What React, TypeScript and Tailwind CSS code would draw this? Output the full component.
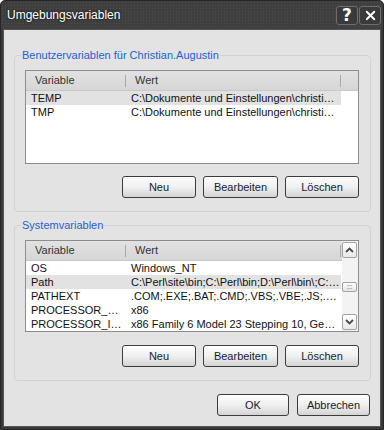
import { X } from "lucide-react";

type Row = [string, string];

const userVars: Row[] = [
  ["TEMP", "C:\\Dokumente und Einstellungen\\christian.augustin\\Lokale Einstellungen\\Temp"],
  ["TMP", "C:\\Dokumente und Einstellungen\\christian.augustin\\Lokale Einstellungen\\Temp"],
];

const systemVars: Row[] = [
  ["OS", "Windows_NT"],
  ["Path", "C:\\Perl\\site\\bin;C:\\Perl\\bin;D:\\Perl\\bin\\;C:\\WINDOWS\\system32"],
  ["PATHEXT", ".COM;.EXE;.BAT;.CMD;.VBS;.VBE;.JS;.JSE;.WSF;.WSH"],
  ["PROCESSOR_ARCHITECTURE", "x86"],
  ["PROCESSOR_IDENTIFIER", "x86 Family 6 Model 23 Stepping 10, GenuineIntel"],
];

function Btn({ label, w = "w-[74px]" }: { label: string; w?: string }) {
  return (
    <button
      className={`${w} h-[22px] rounded-[3px] border border-[#3c3c3c] bg-linear-to-b from-[#fdfdfd] via-[#f0f0f0] to-[#d4d4d4] text-[11px] leading-none text-[#141c30] shadow-[inset_0_1px_0_#ffffff]`}
    >
      {label}
    </button>
  );
}

function Header() {
  return (
    <div className="h-[20px] shrink-0 flex items-center bg-linear-to-b from-[#e2e2e2] to-[#d6d6d6] border-b border-[#c8c8c8] text-[11px] text-[#333]">
      <div className="w-[100px] pl-[9px] flex items-center justify-between">
        <span>Variable</span>
        <span className="w-px h-[12px] bg-[#a9a9a9]" />
      </div>
      <div className="w-[215px] pl-[9px] flex items-center justify-between">
        <span>Wert</span>
        <span className="w-px h-[12px] bg-[#a9a9a9]" />
      </div>
    </div>
  );
}

function Rows({ rows, selected }: { rows: Row[]; selected: number }) {
  return (
    <div className="flex flex-col">
      {rows.map(([name, value], i) => (
        <div
          key={name}
          className={`h-[14px] w-[315px] flex items-center text-[11px] text-[#111] ${i === selected ? "bg-[#e2e2e2]" : ""}`}
        >
          <span className="w-[100px] shrink-0 pl-[5px] pr-px truncate">{name}</span>
          <span className="w-[215px] shrink-0 pl-[5px] pr-px truncate">{value}</span>
        </div>
      ))}
    </div>
  );
}

function Chevron({ up }: { up?: boolean }) {
  return (
    <svg width="9" height="6" viewBox="0 0 9 6">
      <polyline
        points={up ? "1,5 4.5,1.5 8,5" : "1,1 4.5,4.5 8,1"}
        fill="none"
        stroke="#4a4a4a"
        strokeWidth="1.8"
      />
    </svg>
  );
}

function ScrollBar() {
  return (
    <div className="w-[16px] shrink-0 flex flex-col bg-[#f3f3f3] py-px pr-px">
      <div className="h-[16px] flex items-center justify-center rounded-[2px] border border-[#a3a3a3] bg-linear-to-b from-white to-[#e8e8e8]">
        <Chevron up />
      </div>
      <div className="flex-1 flex flex-col">
        <div className="mt-[24px] h-[10px] rounded-[2px] border border-[#a3a3a3] bg-linear-to-b from-white to-[#e4e4e4] flex items-center justify-center">
          <div className="w-[5px] h-[4px] border-y border-[#bdbdbd]" />
        </div>
      </div>
      <div className="h-[16px] flex items-center justify-center rounded-[2px] border border-[#a3a3a3] bg-linear-to-b from-white to-[#e8e8e8]">
        <Chevron />
      </div>
    </div>
  );
}

function Group({ title, children }: { title: string; children: React.ReactNode }) {
  return (
    <fieldset className="border border-[#d2d2d0] rounded-[4px]">
      <legend className="ml-[6px] px-[1px] text-[11px] leading-[13px] text-[#1e5fd8]">{title}</legend>
      <div className="pl-[10px] pr-[11px] pt-[8px] pb-[13px] flex flex-col">{children}</div>
    </fieldset>
  );
}

export default function App() {
  return (
    <div className="w-[384px] h-[430px] bg-[#3a3a3a] flex flex-col font-['Liberation_Sans',Arial,sans-serif] rounded-t-[5px] border border-[#262626]">
      {/* title bar */}
      <div className="h-[28px] shrink-0 flex items-center pl-[6px] pr-[2px] bg-[#3f3f3f] bg-[radial-gradient(circle,#4d4d4d_0.7px,transparent_0.8px)] bg-[length:3px_3px] rounded-t-[5px]">
        <span className="flex-1 text-[12px] text-white [text-shadow:0_0_3px_#000]">Umgebungsvariablen</span>
        <div className="flex gap-px">
          <div className="w-[22px] h-[19px] rounded-[3px] border border-[#6e6e6e] bg-[#3a3a3a] flex items-center justify-center text-white text-[17px] font-bold leading-none font-['DejaVu_Sans',sans-serif]">
            ?
          </div>
          <div className="w-[22px] h-[19px] rounded-[3px] border border-[#6e6e6e] bg-[#3a3a3a] flex items-center justify-center text-white">
            <X size={15} strokeWidth={3} />
          </div>
        </div>
      </div>

      {/* client area */}
      <div className="flex-1 mx-[2px] mb-[2px] bg-[#e3e3e3] border border-[#555] pl-[10px] pr-[9px] pt-[19px] flex flex-col">
        <Group title="Benutzervariablen für Christian.Augustin">
          <div className="h-[94px] border border-[#8d8d8d] bg-white flex flex-col">
            <Header />
            <Rows rows={userVars} selected={0} />
          </div>
          <div className="mt-[12px] flex justify-end gap-[7px]">
            <Btn label="Neu" />
            <Btn label="Bearbeiten" w="w-[75px]" />
            <Btn label="Löschen" />
          </div>
        </Group>

        <div className="h-[7px]" />

        <Group title="Systemvariablen">
          <div className="h-[92px] border border-[#8d8d8d] bg-white flex">
            <div className="flex-1 flex flex-col">
              <Header />
              <Rows rows={systemVars} selected={1} />
            </div>
            <ScrollBar />
          </div>
          <div className="mt-[13px] flex justify-end gap-[7px]">
            <Btn label="Neu" />
            <Btn label="Bearbeiten" w="w-[75px]" />
            <Btn label="Löschen" />
          </div>
        </Group>

        <div className="mt-[13px] flex justify-end gap-[8px] pr-[1px]">
          <Btn label="OK" w="w-[72px]" />
          <Btn label="Abbrechen" w="w-[73px]" />
        </div>
      </div>
    </div>
  );
}
